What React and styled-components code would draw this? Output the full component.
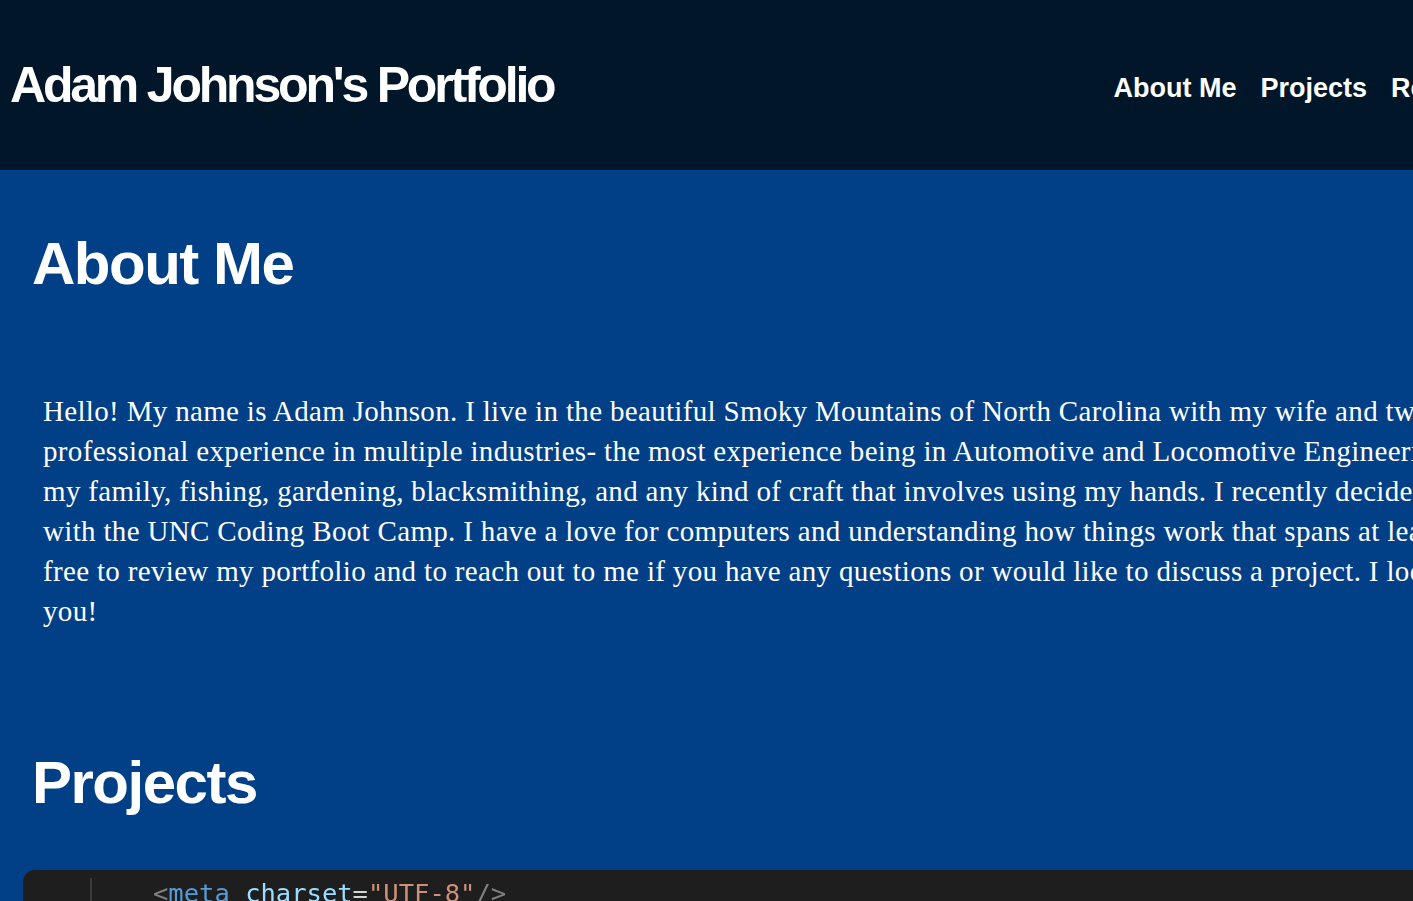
import React from "react";
import styled, { createGlobalStyle } from "styled-components";

const Global = createGlobalStyle`
  html, body { margin: 0; padding: 0; overflow: hidden; }
  body { background: #014086; }
`;

const Page = styled.div`
  width: 1900px;
  min-height: 901px;
  background: #014086;
`;

const Header = styled.header`
  height: 170px;
  background: #011628;
  display: flex;
  align-items: center;
  padding: 0 10px;
  box-sizing: border-box;
`;

const Title = styled.h1`
  margin: 0;
  font-family: "Liberation Sans", Arial, sans-serif;
  font-weight: 700;
  font-size: 50px;
  letter-spacing: -3.2px;
  color: #ffffff;
  white-space: nowrap;
`;

const Nav = styled.nav`
  display: flex;
  gap: 24px;
  margin-left: 560px;
  padding-top: 6px;
`;

const NavLink = styled.a`
  font-family: "Liberation Sans", Arial, sans-serif;
  font-weight: 700;
  font-size: 27px;
  color: #ffffff;
  text-decoration: none;
  white-space: nowrap;
`;

const Main = styled.main`
  padding: 0 32px;
`;

const SectionTitle = styled.h2`
  margin: ${(p) => p.$top}px 0 0;
  font-family: "Liberation Sans", Arial, sans-serif;
  font-weight: 700;
  font-size: 60px;
  letter-spacing: -1.5px;
  color: #ffffff;
  white-space: nowrap;
`;

const Bio = styled.p`
  margin: 93px 0 0 11px;
  font-family: "Liberation Serif", "Times New Roman", serif;
  font-size: 29px;
  letter-spacing: 0.33px;
  line-height: 40px;
  color: #ffffff;
  white-space: nowrap;
`;

const CodeShot = styled.div`
  margin: 53px 0 0 -9px;
  height: 200px;
  background: #1e1e1e;
  border-radius: 12px 0 0 0;
  display: flex;
  padding-top: 8px;
  box-sizing: border-box;
`;

const Gutter = styled.div`
  width: 67px;
  border-right: 2px solid #3a3a3a;
  height: 60px;
`;

const CodeLine = styled.pre`
  margin: 0 0 0 61px;
  font-family: "DejaVu Sans Mono", "Liberation Mono", monospace;
  font-size: 25.5px;
  line-height: 30px;
  color: #d4d4d4;
  filter: blur(0.4px);
`;

const Tok = styled.span`
  color: ${(p) => p.$c};
`;

export default function App() {
  return (
    <>
      <Global />
      <Page>
        <Header>
          <Title>Adam Johnson's Portfolio</Title>
          <Nav>
            <NavLink href="#about">About Me</NavLink>
            <NavLink href="#projects">Projects</NavLink>
            <NavLink href="#resume">Resume</NavLink>
            <NavLink href="#contact">Contact</NavLink>
          </Nav>
        </Header>
        <Main>
          <SectionTitle id="about" $top={59}>About Me</SectionTitle>
          <Bio>
            Hello! My name is Adam Johnson. I live in the beautiful Smoky Mountains of North Carolina with my wife and two children. I have
            <br />
            professional experience in multiple industries- the most experience being in Automotive and Locomotive Engineering. In my free time I enjoy
            <br />
            my family, fishing, gardening, blacksmithing, and any kind of craft that involves using my hands. I recently decided to pursue web development
            <br />
            with the UNC Coding Boot Camp. I have a love for computers and understanding how things work that spans at least twenty years. Please feel
            <br />
            free to review my portfolio and to reach out to me if you have any questions or would like to discuss a project. I look forward to hearing from
            <br />
            you!
          </Bio>
          <SectionTitle id="projects" $top={117}>Projects</SectionTitle>
          <CodeShot>
            <Gutter />
            <CodeLine>
              <Tok $c="#808080">&lt;</Tok>
              <Tok $c="#569cd6">meta</Tok>{" "}
              <Tok $c="#9cdcfe">charset</Tok>
              <Tok $c="#d4d4d4">=</Tok>
              <Tok $c="#ce9178">"UTF-8"</Tok>
              <Tok $c="#808080">/&gt;</Tok>
            </CodeLine>
          </CodeShot>
        </Main>
      </Page>
    </>
  );
}
